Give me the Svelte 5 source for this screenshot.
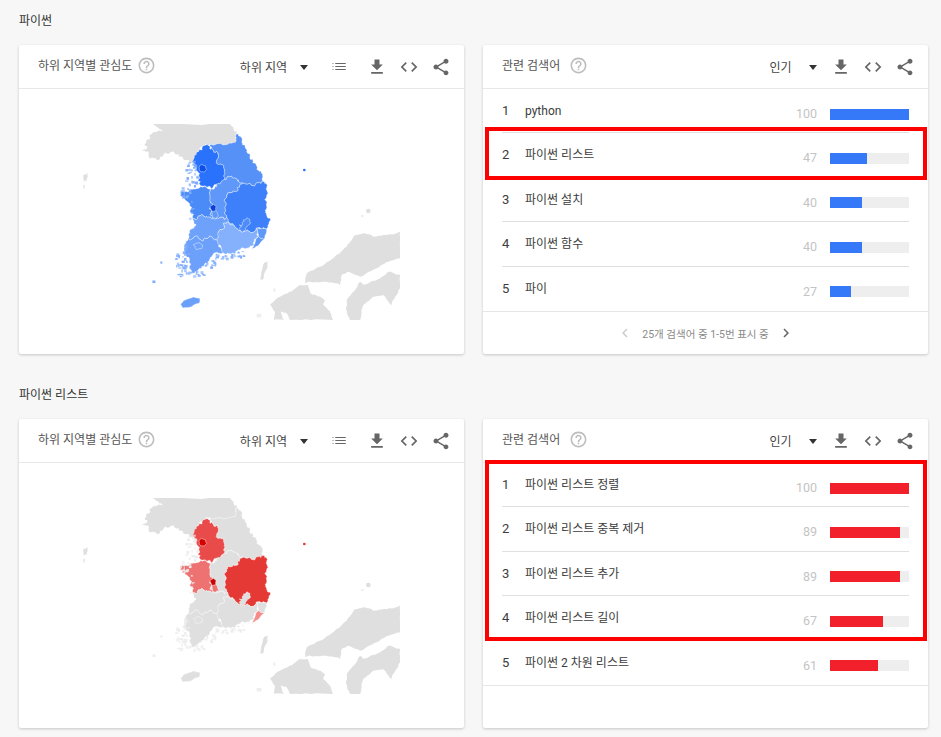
<script>
  const paths = {
    help: 'M11 18h2v-2h-2v2zm1-16C6.48 2 2 6.48 2 12s4.48 10 10 10 10-4.48 10-10S17.52 2 12 2zm0 18c-4.41 0-8-3.59-8-8s3.59-8 8-8 8 3.59 8 8-3.59 8-8 8zm0-14c-2.21 0-4 1.79-4 4h2c0-1.1.9-2 2-2s2 .9 2 2c0 2-3 1.75-3 5h2c0-2.25 3-2.5 3-5 0-2.21-1.79-4-4-4z',
    list: 'M4 10.5c-.4 0-.8.3-.8.8s.4.7.8.7.8-.3.8-.7-.4-.8-.8-.8zM4 6.5c-.4 0-.8.3-.8.8s.4.7.8.7.8-.3.8-.7-.4-.8-.8-.8zM4 14.5c-.4 0-.8.3-.8.8s.4.7.8.7.8-.3.8-.7-.4-.8-.8-.8zM7 16h14v-1.500H7V16zm0-4h14v-1.500H7V12zm0-5.500V8h14V6.500H7z',
    download: 'M19 9h-4V3H9v6H5l7 7 7-7zM5 18v2h14v-2H5z',
    code: 'M9.4 16.6L4.8 12l4.6-4.6L8 6l-6 6 6 6 1.4-1.4zm5.2 0l4.6-4.6-4.6-4.6L16 6l6 6-6 6-1.4-1.4z',
    share: 'M18 16.08c-.76 0-1.44.3-1.96.77L8.91 12.7c.05-.23.09-.46.09-.7s-.04-.47-.09-.7l7.05-4.11c.54.5 1.25.81 2.04.81 1.66 0 3-1.34 3-3s-1.34-3-3-3-3 1.34-3 3c0 .24.04.47.09.7L8.04 9.81C7.5 9.31 6.79 9 6 9c-1.66 0-3 1.34-3 3s1.34 3 3 3c.79 0 1.5-.31 2.04-.81l7.12 4.16c-.05.21-.08.43-.08.65 0 1.61 1.31 2.92 2.92 2.92s2.92-1.31 2.92-2.92-1.31-2.92-2.92-2.92z'
  };

  const GRAY = '#dfdfdf';

  function noise(x, y, salt) {
    const s = Math.sin(x * 12.9898 + y * 78.233 + salt) * 43758.5453;
    return s - Math.floor(s) - 0.5;
  }
  // Midpoint displacement keyed on the midpoint itself, so two regions sharing an edge stay flush.
  function roughen(str, amp) {
    let pts = str.split(' ').map((p) => p.split(',').map(Number));
    for (let level = 0; level < 3; level++) {
      const next = [];
      pts.forEach((a, i) => {
        const b = pts[(i + 1) % pts.length];
        const mx = Math.round((a[0] + b[0]) * 50) / 100;
        const my = Math.round((a[1] + b[1]) * 50) / 100;
        const len = Math.hypot(a[0] - b[0], a[1] - b[1]);
        const k = Math.min(1, len / 18) * amp;
        let x = mx + noise(mx, my, 1) * k * 2;
        let y = my + noise(mx, my, 2) * k * 2;
        x = Math.min(990, Math.max(40, x));
        y = Math.min(630, Math.max(42, y));
        next.push(a, [x, y]);
      });
      pts = next;
    }
    return pts.map((p) => p[0].toFixed(1) + ',' + p[1].toFixed(1)).join(' ');
  }

  const base = {
    northKorea: '250,42 475,42 490,52 503,70 499,90 482,100 410,100 395,112 385,125 373,140 372,160 352,150 330,140 300,128 285,128 270,148 250,145 235,128 215,122 232,110 228,92 245,72 282,62 262,52',
    gangwon: '410,100 482,100 499,90 503,72 515,95 530,125 548,148 562,172 575,190 583,215 560,218 525,222 505,210 490,205 470,205 456,212 462,176 442,162 442,130 425,115',
    gyeonggi: '408,105 425,115 442,130 442,162 462,176 456,212 440,222 425,236 405,228 392,228 384,212 388,190 378,178 372,160 373,135 385,125',
    chungnam: '360,240 392,230 405,230 425,237 420,262 428,282 418,296 424,310 430,325 412,322 398,314 382,322 368,326 362,300 358,280 345,264 330,258 345,245',
    chungbuk: '425,237 440,222 456,212 470,205 490,205 505,210 525,222 505,240 480,250 464,268 466,300 470,322 445,326 430,325 424,310 418,296 428,282 420,262',
    gyeongbuk: '525,222 560,218 583,215 590,240 590,290 592,322 600,325 594,345 590,358 560,354 540,365 520,365 505,360 490,345 470,322 466,300 464,268 480,250 505,240',
    gyeongnam: '460,340 490,345 505,360 520,365 540,365 560,354 565,380 552,405 535,415 510,420 490,430 465,432 448,405 445,365',
    ulsan: '560,354 590,358 586,375 582,388 565,380',
    busan: '565,380 582,388 566,405 546,419 552,405',
    jeonbuk: '368,326 382,322 398,314 412,322 430,325 445,326 470,322 490,345 460,340 445,365 448,395 425,380 400,392 378,378 355,385 358,365 378,345',
    jeonnam: '355,385 378,378 400,392 425,380 448,395 465,432 445,430 425,440 405,460 385,480 368,490 358,470 350,440 345,405',
    daegu: '508,345 520,330 535,326 536,345 525,360 512,362',
    seoul: '387,172 395,163 406,167 410,178 404,185 391,184',
    daejeon: '420,290 430,283 438,288 438,302 425,304',
    sejong: '424,304 438,302 446,318 436,325 428,322',
    gwangju: '370,404 385,398 398,405 395,416 378,418',
    jeju: '332,582 345,570 372,561 390,565 388,578 368,588 340,594',
    honshu: '990,365 970,373 910,380 880,370 855,375 830,410 790,445 750,470 710,490 705,520 720,515 770,515 810,525 815,495 835,485 870,500 920,475 970,450 990,445',
    kyushu: '600,585 630,560 670,540 690,525 715,525 722,550 750,560 765,572 760,585 780,605 790,630 660,630 648,608 632,605 642,630 612,630 615,610',
    shikoku: '830,570 855,540 870,515 880,525 920,510 955,485 990,495 990,535 965,585 940,555 910,560 880,585 870,630 840,630 828,595',
    tsushima: '582,458 593,455 590,478 582,492 580,508 571,508 574,485',
    china: '40,195 53,190 50,212 41,215',
    china2: '40,225 44,224 43,236 40,236'
  };
  const calm = new Set(['jeju', 'seoul', 'daejeon', 'sejong', 'gwangju', 'china', 'china2', 'tsushima', 'ulsan', 'busan', 'honshu', 'kyushu', 'shikoku']);
  const geometry = {};
  for (const k in base) geometry[k] = roughen(base[k], calm.has(k) ? 2 : 6);

  // [centre x, centre y, half width, half height, fragment count] for the broken coastline
  const clusters = [
    [360, 170, 16, 20, 18], [362, 210, 18, 16, 14], [345, 245, 16, 14, 14],
    [360, 300, 6, 30, 6], [345, 415, 8, 15, 10], [332, 450, 18, 26, 26], [350, 482, 16, 10, 10],
    [385, 488, 20, 8, 12], [420, 460, 18, 11, 14], [455, 438, 20, 7, 12], [505, 430, 28, 9, 14],
    [322, 494, 8, 4, 3], [272, 455, 2, 2, 1], [247, 511, 2, 2, 1]
  ];
  const fragments = clusters.flatMap(([cx, cy, hw, hh, n], c) =>
    Array.from({ length: n }, (_, i) => {
      const x = cx + noise(c, i, 3) * 2 * hw;
      const y = cy + noise(c, i, 4) * 2 * hh;
      const w = 3 + (noise(c, i, 5) + 0.5) * 7;
      const h = 3 + (noise(c, i, 6) + 0.5) * 6;
      return { x, y, w, h, o: 0.55 + (noise(c, i, 7) + 0.5) * 0.45 };
    })
  );

  const blue = {
    gangwon: '#5691f7', gyeonggi: '#2a72fc', chungnam: '#4b8bf7', chungbuk: '#5f98f8',
    gyeongbuk: '#3d80f9', gyeongnam: '#84b0fc', jeonbuk: '#6ea2fa', jeonnam: '#6ca0fa',
    busan: '#5f98f8', ulsan: '#5f98f8', daegu: '#4f8cf8', seoul: '#0d50e8', daejeon: '#0b3fd6', sejong: '#5f98f8',
    gwangju: '#6ca0fa', jeju: '#6aa0fa', islands: '#7dabfb', dot: '#2a72fc'
  };
  const red = {
    gangwon: GRAY, gyeonggi: '#e94b4b', chungnam: '#ef7272', chungbuk: GRAY,
    gyeongbuk: '#e53935', gyeongnam: GRAY, jeonbuk: GRAY, jeonnam: GRAY,
    busan: '#f48a8a', ulsan: GRAY, daegu: GRAY, seoul: '#d50000', daejeon: '#c80000', sejong: '#ef7272',
    gwangju: GRAY, jeju: GRAY, islands: '#ececec', dot: '#e53935'
  };
  const regionOrder = ['gangwon','chungnam','chungbuk','gyeongbuk','jeonbuk','jeonnam','gyeongnam','ulsan','busan','gyeonggi','seoul','daegu','sejong','daejeon','gwangju','jeju'];
  const ringed = new Set(['seoul', 'daegu', 'gwangju']);
  const landOrder = ['northKorea','honshu','kyushu','shikoku','tsushima','china','china2'];

  const sections = [
    {
      title: '파이썬', color: '#3579f9', palette: blue, footer: true,
      rows: [['python',100],['파이썬 리스트',47],['파이썬 설치',40],['파이썬 함수',40],['파이',27]],
      mark: 'first'
    },
    {
      title: '파이썬 리스트', color: '#f2202a', palette: red, footer: false,
      rows: [['파이썬 리스트 정렬',100],['파이썬 리스트 중복 제거',89],['파이썬 리스트 추가',89],['파이썬 리스트 길이',67],['파이썬 2 차원 리스트',61]],
      mark: 'second'
    }
  ];
</script>

{#snippet icon(name, cls)}
  <svg class={cls} viewBox="0 0 24 24" aria-hidden="true"><path d={paths[name]} /></svg>
{/snippet}

{#snippet tools()}
  {@render icon('download', 'ic dl')}
  {@render icon('code', 'ic')}
  {@render icon('share', 'ic')}
{/snippet}

{#snippet koreaMap(p)}
  <svg class="map" viewBox="0 0 1020 660" aria-hidden="true">
    {#each landOrder as k}
      <polygon points={geometry[k]} fill={GRAY} />
    {/each}
    <circle cx="895" cy="303" r="7" fill={GRAY} />
    <circle cx="877" cy="318" r="4" fill="#eeeeee" />
    <rect x="610" y="535" width="6" height="10" fill="#eeeeee" />
    <rect x="560" y="612" width="14" height="10" fill="#eeeeee" />
    {#each regionOrder as k}
      <polygon class="region" class:ring={ringed.has(k)} points={geometry[k]} fill={p[k]} />
    {/each}
    {#each fragments as f}
      <rect x={f.x} y={f.y} width={f.w} height={f.h} fill={p.islands} opacity={f.o} />
    {/each}
    <circle cx="703" cy="180" r="4" fill={p.dot} />
  </svg>
{/snippet}

<div class="page">
  {#each sections as s}
    <section class="section">
      <h2 class="heading">{s.title}</h2>
      <div class="cards">
        <article class="card">
          <header class="head">
            <span class="title">하위 지역별 관심도</span>
            {@render icon('help', 'help')}
            <span class="select">하위 지역</span>
            <span class="caret"></span>
            {@render icon('list', 'ic list')}
            {@render tools()}
          </header>
          {@render koreaMap(s.palette)}
        </article>

        <article class="card">
          <header class="head related">
            <span class="title">관련 검색어</span>
            {@render icon('help', 'help')}
            <span class="select">인기</span>
            <span class="caret"></span>
            {@render tools()}
          </header>
          <ol class="rows">
            {#each s.rows as [label, value], i}
              <li class="row">
                <span class="idx">{i + 1}</span>
                <span class="label">{label}</span>
                <span class="value">{value}</span>
                <span class="track"><span class="fill" style:width="{value}%" style:background={s.color}></span></span>
              </li>
            {/each}
          </ol>
          {#if s.footer}
            <div class="pager">
              <svg class="chev off" viewBox="0 0 24 24" aria-hidden="true"><path d="M15.4 7.4L14 6l-6 6 6 6 1.400-1.400L10.800 12z" /></svg>
              <span>25개 검색어 중 1-5번 표시 중</span>
              <svg class="chev" viewBox="0 0 24 24" aria-hidden="true"><path d="M8.600 16.600L10 18l6-6-6-6-1.400 1.400L13.200 12z" /></svg>
            </div>
          {/if}
          <div class={'mark ' + s.mark}></div>
        </article>
      </div>
    </section>
  {/each}
</div>

<style>
  :global(body) {
    margin: 0;
    background: #f7f7f7;
    overflow: hidden;
  }
  .page {
    width: 941px;
    height: 737px;
    overflow: hidden;
    font-family: Roboto, "Noto Sans CJK KR", sans-serif;
    color: #333;
    font-size: 13px;
  }
  .section {
    padding: 11px 0 20px 19px;
  }
  .heading {
    margin: 0 0 14px;
    font-size: 12px;
    font-weight: 400;
    line-height: 20px;
    color: #333;
  }
  .cards {
    display: flex;
    gap: 19px;
  }
  .card {
    position: relative;
    width: 445px;
    height: 309px;
    background: #fff;
    border-radius: 2px;
    box-shadow: 0 1px 3px rgba(0, 0, 0, 0.2);
  }
  .head {
    height: 44px;
    box-sizing: border-box;
    display: flex;
    align-items: center;
    padding: 0 13px 0 19px;
    border-bottom: 1px solid #e8e8e8;
  }
  .title {
    font-size: 12px;
    color: #555;
    line-height: 40px;
    margin-bottom: 2px;
  }
  .help {
    width: 19px;
    height: 19px;
    margin: 0 0 2px 5px;
    fill: #bdbdbd;
  }
  .related .help {
    margin-left: 9px;
  }
  .select {
    margin-left: auto;
    font-size: 12px;
    color: #444;
  }
  .caret {
    width: 0;
    height: 0;
    margin: 2px 2.5px 0 13px;
    border-left: 4px solid transparent;
    border-right: 4px solid transparent;
    border-top: 5px solid #333;
  }
  .related .caret {
    margin-left: 17px;
  }
  .ic {
    width: 20px;
    height: 20px;
    fill: #666;
    margin-left: 12px;
    flex: none;
  }
  .ic.list {
    margin-left: 19.5px;
    margin-right: 7px;
    width: 18px;
    height: 18px;
  }
  .map {
    display: block;
    width: 340px;
    height: 220px;
    margin: 21px 0 0 51px;
  }
  .region {
    stroke: #ffffff;
    stroke-opacity: 0.55;
    stroke-width: 2;
    stroke-linejoin: round;
  }
  .region.ring {
    stroke-opacity: 0.7;
    stroke-width: 2;
  }
  .rows {
    list-style: none;
    margin: 0;
    padding: 0;
    border-bottom: 1px solid #e6e6e6;
  }
  .row {
    display: grid;
    grid-template-columns: 23px 1fr 40px 79px;
    height: 44.4px;
    box-sizing: border-box;
    margin: 0 19px;
    border-bottom: 1px solid #e0e0e0;
  }
  .row:last-child {
    border-bottom: 0;
  }
  .idx,
  .label {
    line-height: 20px;
    padding-top: 12px;
    font-size: 12px;
    color: #3c3c3c;
  }
  .idx {
    font-size: 13px;
  }
  .value {
    line-height: 20px;
    margin-top: 15px;
    text-align: right;
    margin-right: 13px;
    color: #c4c4c4;
    font-size: 12.5px;
  }
  .track {
    height: 11px;
    margin-top: 19.5px;
    background: #eeeeee;
  }
  .fill {
    display: block;
    height: 100%;
  }
  .pager {
    height: 43px;
    display: flex;
    align-items: center;
    justify-content: center;
    gap: 8px;
    font-size: 10.5px;
    color: #8a8a8a;
  }
  .chev {
    width: 18px;
    height: 18px;
    fill: #666;
  }
  .chev.off {
    fill: #ccc;
  }
  .mark {
    position: absolute;
    left: 2px;
    width: 442px;
    box-sizing: border-box;
    border: 4px solid #ff0000;
    pointer-events: none;
  }
  .mark.first {
    top: 82px;
    height: 53px;
  }
  .mark.second {
    top: 41px;
    height: 181px;
  }
</style>
